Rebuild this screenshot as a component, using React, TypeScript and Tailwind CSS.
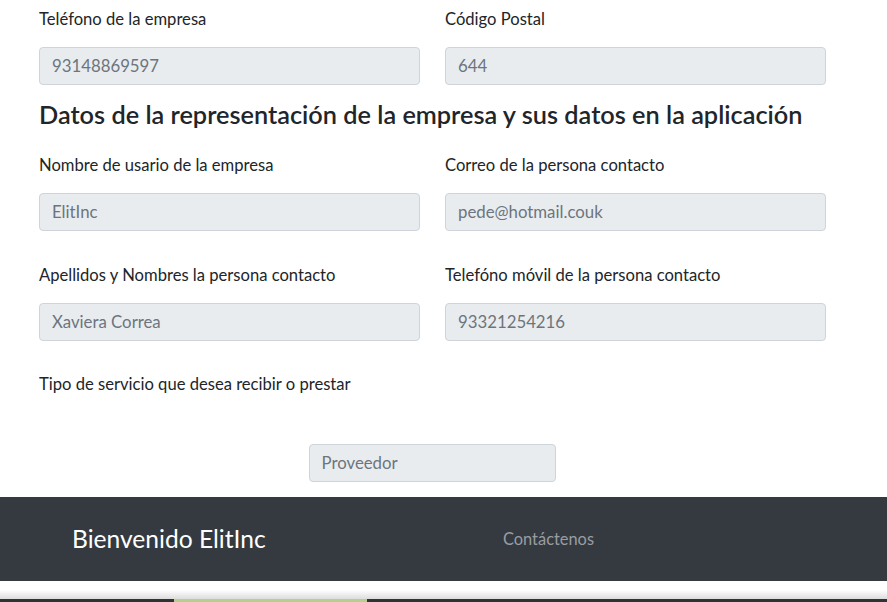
import React from 'react'

const font = { fontFamily: '"Lato", "Noto Sans", sans-serif' }

function Field({ label, value }: { label: string; value: string }) {
  return (
    <div className="flex flex-col">
      <label className="text-[16.6px] leading-[24px] text-[#212529]">{label}</label>
      <div className="mt-[16px] flex h-[38px] items-center rounded-[4px] border border-[#ced4da] bg-[#e9ecef] px-[12px] text-[16.8px] text-[#6c757d]">
        {value}
      </div>
    </div>
  )
}

export default function App() {
  return (
    <div className="min-h-[602px] bg-white" style={font}>
      <div className="ml-[39px] w-[787px] pt-[7px]">
        <div className="grid grid-cols-2 gap-x-[25px]">
          <Field label="Teléfono de la empresa" value="93148869597" />
          <Field label="Código Postal" value="644" />
        </div>

        <h4 className="mt-[15px] text-[25.3px] font-semibold leading-[29px] text-[#212529]">
          Datos de la representación de la empresa y sus datos en la aplicación
        </h4>

        <div className="mt-[24px] grid grid-cols-2 gap-x-[25px] gap-y-[32px]">
          <Field label="Nombre de usario de la empresa" value="ElitInc" />
          <Field label="Correo de la persona contacto" value="pede@hotmail.couk" />
          <Field label="Apellidos y Nombres la persona contacto" value="Xaviera Correa" />
          <Field label="Telefóno móvil de la persona contacto" value="93321254216" />
        </div>

        <p className="mt-[31px] text-[16.6px] leading-[24px] text-[#212529]">
          Tipo de servicio que desea recibir o prestar
        </p>

        <div className="mt-[48px] flex justify-center">
          <div className="ml-[-1px] flex h-[38px] w-[247px] items-center rounded-[4px] border border-[#ced4da] bg-[#e9ecef] px-[12px] text-[16.8px] text-[#6c757d]">
            Proveedor
          </div>
        </div>
      </div>

      <footer className="mt-[15px] flex h-[84px] items-center bg-[#343a40]">
        <span className="ml-[72px] w-[431px] text-[24.6px] text-white">Bienvenido ElitInc</span>
        <span className="text-[16.4px] text-[#9a9da0]">Contáctenos</span>
      </footer>

      <div className="h-[18px] bg-gradient-to-b from-white via-white to-[#dcdcdc]" />
      <div className="flex h-[3px] bg-[#2f3336]">
        <div className="ml-[174px] w-[193px] bg-[#b5cf8f]" />
      </div>
    </div>
  )
}
